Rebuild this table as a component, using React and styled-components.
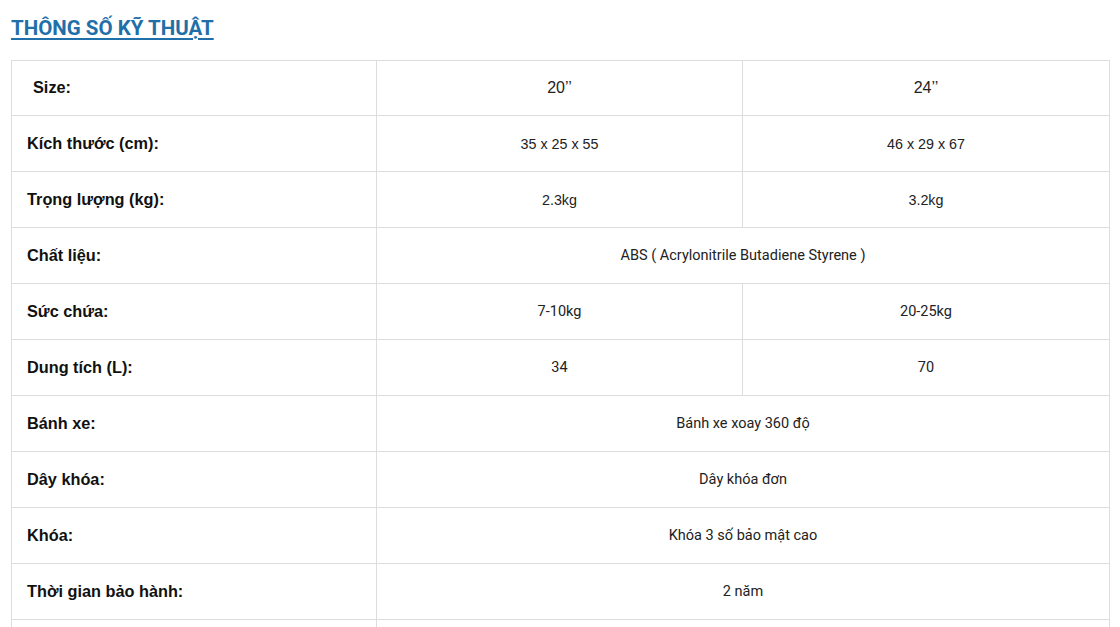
import React from 'react';
import styled, { createGlobalStyle } from 'styled-components';

const GlobalStyle = createGlobalStyle`
    body {
        margin: 0;
        background: #ffffff;
        font-family: Roboto, 'Liberation Sans', sans-serif;
        color: #222222;
    }
`;

const Page = styled.div`
    padding: 14px 11px 0 11px;
`;

const Heading = styled.h2`
    margin: 0 0 18px 0;
    font-family: Roboto, sans-serif;
    font-weight: 700;
    font-size: 20.5px;
    line-height: 28px;
    color: #1f6fa9;
    text-decoration: underline;
    text-underline-offset: 3px;
    text-decoration-thickness: 2px;
`;

const Table = styled.table`
    width: 1098px;
    border-collapse: collapse;
    table-layout: fixed;
`;

const Col = styled.col`
    width: ${(p) => p.$w}px;
`;

const Row = styled.tr`
    height: ${(p) => (p.$first ? '55px' : '56px')};
`;

const Label = styled.td`
    border: 1px solid #dddddd;
    padding: 0 0 1px ${(p) => p.$indent || 15}px;
    font-family: 'Liberation Sans', Arial, sans-serif;
    font-weight: 700;
    font-size: 16.3px;
    color: #111111;
    vertical-align: middle;
`;

const Cell = styled.td`
    border: 1px solid #dddddd;
    padding: 0;
    text-align: center;
    vertical-align: middle;
    font-family: ${(p) => (p.$arial ? "'Liberation Sans', Arial, sans-serif" : 'Roboto, sans-serif')};
    font-size: ${(p) => p.$size || (p.$arial ? 14.3 : 14.5)}px;
    color: #222222;
`;

const rows = [
    { label: 'Size:', indent: 21, cells: ['20’’', '24’’'], arial: true, size: 16, first: true },
    { label: 'Kích thước (cm):', cells: ['35 x 25 x 55', '46 x 29 x 67'], arial: true },
    { label: 'Trọng lượng (kg):', cells: ['2.3kg', '3.2kg'], arial: true },
    { label: 'Chất liệu:', cells: ['ABS ( Acrylonitrile Butadiene Styrene )'] },
    { label: 'Sức chứa:', cells: ['7-10kg', '20-25kg'] },
    { label: 'Dung tích (L):', cells: ['34', '70'] },
    { label: 'Bánh xe:', cells: ['Bánh xe xoay 360 độ'] },
    { label: 'Dây khóa:', cells: ['Dây khóa đơn'] },
    { label: 'Khóa:', cells: ['Khóa 3 số bảo mật cao'] },
    { label: 'Thời gian bảo hành:', cells: ['2 năm'] },
    { label: '', cells: [''] },
];

export default function App() {
    return (
        <Page>
            <GlobalStyle />
            <Heading>THÔNG SỐ KỸ THUẬT</Heading>
            <Table>
                <colgroup>
                    <Col $w={365} />
                    <Col $w={366} />
                    <Col $w={367} />
                </colgroup>
                <tbody>
                    {rows.map((r, i) => (
                        <Row key={i} $first={r.first}>
                            <Label $indent={r.indent}>{r.label}</Label>
                            {r.cells.map((c, j) => (
                                <Cell
                                    key={j}
                                    colSpan={r.cells.length === 1 ? 2 : 1}
                                    $arial={r.arial}
                                    $size={r.size}
                                >
                                    {c}
                                </Cell>
                            ))}
                        </Row>
                    ))}
                </tbody>
            </Table>
        </Page>
    );
}
